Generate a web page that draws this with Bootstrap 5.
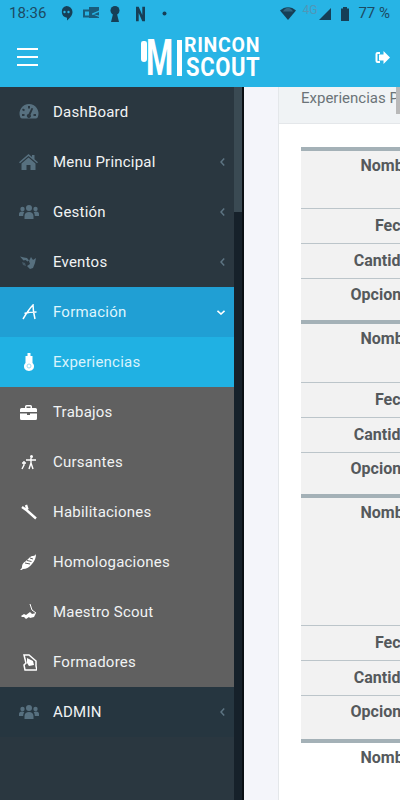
<!DOCTYPE html>
<html lang="es">
<head>
    <meta charset="UTF-8">
    <meta name="viewport" content="width=device-width, initial-scale=1.0">
    <title>Rincon Scout</title>
    <link href="https://cdn.jsdelivr.net/npm/bootstrap@5.3.0/dist/css/bootstrap.min.css" rel="stylesheet">
    <style>
        html, body {
            height: 800px;
            overflow: hidden;
        }
        body {
            font-family: Roboto, "Liberation Sans", sans-serif;
            background-color: #f4f5fa;
        }
        .top-area {
            background-color: #27b4e5;
            height: 87px;
        }
        .status-row {
            height: 27px;
            color: #1c4a63;
            font-size: 15px;
            padding: 0 10px 0 9px;
        }
        .status-row svg { fill: #163f57; }
        .status-time { width: 38px; }
        .gap-13 { margin-left: 13px; }
        .gap-10 { margin-left: 10px; }
        .gap-11 { margin-left: 11px; }
        .gap-16 { margin-left: 16px; }
        .gap-17 { margin-left: 17px; }
        .gap-9 { margin-left: 9px; }
        .net-label {
            font-size: 12px;
            line-height: 12px;
            color: #4f97b8;
            width: 17px;
            margin-left: 6px;
            margin-top: -7px;
        }
        .header-row { height: 60px; }
        .burger { width: 21px; margin-left: 17px; }
        .burger span {
            display: block;
            height: 2px;
            background-color: #fff;
            margin-bottom: 6px;
        }
        .logo-box {
            color: #fff;
            margin-left: 103px;
            width: 140px;
            margin-top: 1px;
        }
        .logo-hook {
            width: 6px;
            height: 21px;
            flex-shrink: 0;
            background-color: #fff;
            border-radius: 3px 3px 4px 4px;
            margin: -13px -1px 0 0;
        }
        .logo-m {
            font-weight: 700;
            font-size: 50px;
            line-height: 36px;
            width: 25px;
            flex-shrink: 0;
            transform: scaleX(.62);
            transform-origin: left center;
        }
        .logo-i {
            width: 5px;
            height: 36px;
            flex-shrink: 0;
            background-color: #fff;
            margin: 0 2px 0 6px;
        }
        .logo-words {
            font-weight: 700;
            letter-spacing: .7px;
        }
        .logo-top { font-size: 19.5px; line-height: 16px; }
        .logo-bottom {
            font-size: 25px;
            line-height: 20px;
            margin: 4px 0 0 2px;
            transform: scaleX(.88);
            transform-origin: left center;
        }
        .exit-icon { margin-left: auto; margin-right: 10px; }
        .body-row { height: 713px; }
        .side-menu {
            width: 234px;
            background-color: #2a3740;
            flex-shrink: 0;
        }
        .side-item {
            height: 50px;
            color: #f1f3f4;
            font-size: 15px;
            letter-spacing: .22px;
            padding-right: 9px;
            text-decoration: none;
        }
        .side-item:hover { color: #f1f3f4; }
        .side-icon {
            width: 53px;
            padding-left: 19px;
            flex-shrink: 0;
            line-height: 0;
        }
        .shift-1 { margin-left: 1px; }
        .shift-2 { margin-left: 2px; }
        .shift-3 { margin-left: 3px; }
        .shift-4 { margin-left: 4px; }
        .shift-5 { margin-left: 5px; }
        .icon-muted { fill: #57707f; }
        .icon-white { fill: #fff; }
        .side-arrow { margin-left: auto; }
        .item-open { background-color: #209fd4; color: #dff5fd; }
        .item-current { background-color: #20b1e3; color: #d9f3fc; }
        .item-grey { background-color: #606060; }
        .item-admin { background-color: #263640; }
        .scroll-strip {
            width: 10px;
            flex-shrink: 0;
            background-color: #16212a;
            border-right: 2px solid #0a0f13;
        }
        .scroll-thumb {
            height: 125px;
            background-color: #3a4a53;
        }
        .main-area {
            padding-left: 34px;
            min-width: 0;
            overflow: hidden;
            flex-grow: 1;
        }
        .content-card {
            width: 400px;
            height: 100%;
            border-radius: 0;
            border-width: 0 0 0 1px;
            border-color: #e4e7ea;
        }
        .content-head {
            background-color: #f0f3f5;
            border-radius: 0 !important;
            border-bottom: 1px solid #e4e7ea;
            height: 37px;
            flex-shrink: 0;
            padding: 0 0 0 22px;
            color: #6b7378;
            font-size: 15px;
            line-height: 22px;
        }
        .head-title {
            width: 95px;
            white-space: nowrap;
            overflow: hidden;
        }
        .head-btn {
            width: 40px;
            height: 27px;
            background-color: #b9b9b9;
        }
        .content-body { padding: 23px 0 0 22px; }
        .exp-table {
            width: 300px;
            margin: 0;
        }
        .exp-table tbody { border-top: 4px solid #a4b1b7 !important; }
        .exp-table th {
            width: 126px;
            text-align: right;
            font-size: 16px;
            font-weight: 700;
            line-height: 18px;
            color: #55595c;
            padding: 6px 9px 0 0;
            border-bottom: 1px solid #bcc5ca;
            background-color: #f2f2f2;
            box-shadow: none;
        }
        .exp-table td {
            padding: 0;
            border-bottom: 1px solid #bcc5ca;
            background-color: #f2f2f2;
            box-shadow: none;
        }
        .exp-table tr.row-end th, .exp-table tr.row-end td { border-bottom: 0; }
        .exp-table tr.row-end th { padding-top: 7px; }
        .exp-table tbody.plain-row th, .exp-table tbody.plain-row td { background-color: #fff; border-bottom: 0; }
        .h-name { height: 59px; }
        .h-name-mid { height: 60px; }
        .h-name-tall { height: 129px; }
        .h-short { height: 35px; }
        .h-option { height: 44px; }
        .h-option-wide { height: 46px; }
        .exp-table th.cell-mid { vertical-align: middle; padding-top: 1px; }
    </style>
</head>
<body>
    <div class="top-area">
        <div class="status-row d-flex align-items-center">
            <span class="status-time">18:36</span>
            <div class="d-flex align-items-center flex-grow-1">
                <svg class="gap-13" width="13" height="15" viewBox="0 0 13 15"><path d="M6.500 0a6 6 0 0 1 6 6c0 3.500-3 6.500-5.500 8.500v-2.700A6 6 0 0 1 6.500 0z"/><circle cx="4.500" cy="6" r="1.200" fill="#27b4e5"/><circle cx="8.500" cy="6" r="1.200" fill="#27b4e5"/></svg>
                <svg class="gap-10" width="16" height="13" viewBox="0 0 16 13"><path d="M6 0h10v11H6zM0 2.500h8v8H0z" opacity=".75"/><path d="M2 4.500h4v4H2z" fill="#27b4e5"/><path d="M9 6.500l7-3v1.500l-7 3zM9 7l7 3v-1.500z" fill="#27b4e5"/></svg>
                <svg class="gap-11" width="10" height="16" viewBox="0 0 10 16"><circle cx="5" cy="4.500" r="4.500"/><path d="M3.500 6h3L9 16H1z"/></svg>
                <svg class="gap-16" width="9" height="16" viewBox="0 0 10 16"><path d="M0 0h3l4 9V0h3v16H7L3 7v9H0z"/></svg>
                <svg class="gap-17" width="5" height="5" viewBox="0 0 5 5"><circle cx="2.500" cy="2.500" r="2"/></svg>
            </div>
            <svg width="16" height="13" viewBox="0 0 16 13"><path d="M0 3.500C4.500-1 11.500-1 16 3.500L8 13z"/><path d="M3 4.500C6-.5 10-.5 13 4.500" fill="#4d8cab" opacity=".5"/></svg>
            <span class="net-label">4G</span>
            <svg width="12" height="12" viewBox="0 0 12 12"><path d="M12 0v12H0z"/></svg>
            <svg class="gap-10" width="8" height="14" viewBox="0 0 8 14"><path d="M2 0h4v1.500h2V14H0V1.500h2z"/></svg>
            <span class="gap-9">77 %</span>
        </div>
        <div class="header-row d-flex align-items-center">
            <div class="burger"><span></span><span></span><span class="mb-0"></span></div>
            <div class="logo-box d-flex align-items-center">
                <div class="logo-hook"></div>
                <div class="logo-m">M</div>
                <div class="logo-i"></div>
                <div class="logo-words">
                    <div class="logo-top">RINCON</div>
                    <div class="logo-bottom">SCOUT</div>
                </div>
            </div>
            <svg class="exit-icon" width="15" height="13" viewBox="0 0 15 13" fill="#fff"><path d="M5 1H2.500A2 2 0 0 0 .5 3v7a2 2 0 0 0 2 2H5v-2H2.500V3H5z"/><path d="M8.500 0L15 6.500 8.500 13V9.500H4v-6h4.500z"/></svg>
        </div>
    </div>

    <div class="body-row d-flex">
        <nav class="side-menu d-flex flex-column">
            <a class="side-item d-flex align-items-center" href="#">
                <span class="side-icon"><svg class="icon-muted" width="20" height="18" viewBox="0 0 20 18"><path fill-rule="evenodd" d="M10 1a9.500 9.500 0 0 1 9 12.500c-.3 1-1 2-2 2H3c-1 0-1.700-1-2-2A9.500 9.500 0 0 1 10 1zM9 3v2.500h2V3zM4 5.500L3 7l2 1.300 1-1.500zM12.500 5l-3 6a2 2 0 1 0 2 .800l2.700-6.300zM3 11v2h2.500v-2zM14.500 11v2H17v-2z"/></svg></span>
                DashBoard
            </a>
            <a class="side-item d-flex align-items-center" href="#">
                <span class="side-icon"><svg class="icon-muted" width="19" height="16" viewBox="0 0 19 16"><path d="M9.500 0l3.500 3V1h2.500v4.200L19 8.300l-1 1L9.500 2 1 9.300l-1-1z"/><path d="M9.500 3.500L16.500 9.500V16h-5v-5h-4v5h-5V9.500z"/></svg></span>
                Menu Principal
                <svg class="side-arrow" width="5" height="8" viewBox="0 0 5 8"><path d="M4.200.5L1 4l3.200 3.500" fill="none" stroke="#5d7482" stroke-width="1.500"/></svg>
            </a>
            <a class="side-item d-flex align-items-center" href="#">
                <span class="side-icon"><svg class="icon-muted" width="20" height="14" viewBox="0 0 20 14"><circle cx="10" cy="3" r="3"/><circle cx="3.500" cy="4" r="2.200"/><circle cx="16.500" cy="4" r="2.200"/><path d="M5.500 14v-3c0-2.500 2-4 4.500-4s4.500 1.500 4.500 4v3zM0 11V9c0-1.500 1-2.500 3-2.500 1 0 1.700.2 2.300.7C4.500 8.200 4.200 9.500 4.200 11zM20 11V9c0-1.500-1-2.500-3-2.500-1 0-1.700.2-2.300.7.800 1 1.100 2.300 1.100 3.800z"/></svg></span>
                Gestión
                <svg class="side-arrow" width="5" height="8" viewBox="0 0 5 8"><path d="M4.200.5L1 4l3.200 3.500" fill="none" stroke="#5d7482" stroke-width="1.500"/></svg>
            </a>
            <a class="side-item d-flex align-items-center" href="#">
                <span class="side-icon"><svg class="icon-muted" width="18" height="15" viewBox="0 0 18 15"><path d="M1 1.500l4 1 3 .5 2 2.500-1.500 1-2-1.500-2 .5zM12 2l2 3 3-2-1 5-2 5-3 1-3-3 3-2-1-3z"/><path d="M3 7l3 1 1 3-3-1z" opacity=".6"/></svg></span>
                Eventos
                <svg class="side-arrow" width="5" height="8" viewBox="0 0 5 8"><path d="M4.200.5L1 4l3.200 3.500" fill="none" stroke="#5d7482" stroke-width="1.500"/></svg>
            </a>
            <a class="side-item item-open d-flex align-items-center" href="#">
                <span class="side-icon"><svg class="shift-3" width="15" height="16" viewBox="0 0 15 16"><path d="M1 15C4 10 8 4 11 1c0 4 1 10 2 14M2.500 9.500c3-1 7-1.500 12-1.500" fill="none" stroke="#fff" stroke-width="1.500"/></svg></span>
                Formación
                <svg class="side-arrow" width="8" height="5" viewBox="0 0 8 5"><path d="M.5.800L4 4 7.500.800" fill="none" stroke="#fff" stroke-width="1.600"/></svg>
            </a>
            <a class="side-item item-current d-flex align-items-center" href="#">
                <span class="side-icon"><svg class="shift-5" width="10" height="18" viewBox="0 0 10 18"><path d="M3.500 0h3v3h2v7c1 .8 1.500 2 1.500 3.300C10 16 8 18 5 18s-5-2-5-4.700C0 12 .5 10.800 1.500 10V3h2z" fill="#fff"/><circle cx="5" cy="13" r="2" fill="none" stroke="#9bdcf3"/></svg></span>
                Experiencias
            </a>
            <a class="side-item item-grey d-flex align-items-center" href="#">
                <span class="side-icon"><svg class="icon-white shift-1" width="17" height="15" viewBox="0 0 17 15"><path d="M5 3V1.500A1.500 1.500 0 0 1 6.500 0h4A1.500 1.500 0 0 1 12 1.500V3h3.500A1.500 1.500 0 0 1 17 4.500V7H0V4.500A1.500 1.500 0 0 1 1.500 3zM6.500 1.500V3h4V1.500zM0 8.500h7V10h3V8.500h7v5a1.500 1.500 0 0 1-1.500 1.500h-14A1.500 1.500 0 0 1 0 13.500z"/></svg></span>
                Trabajos
            </a>
            <a class="side-item item-grey d-flex align-items-center" href="#">
                <span class="side-icon"><svg class="shift-2" width="16" height="15" viewBox="0 0 16 15"><circle cx="10.500" cy="1.500" r="1.500" fill="#fff"/><path d="M5 5h10M10 3v5l-2 6M10 8l2 6M1 8h4M3 6v4l-2 4" fill="none" stroke="#fff" stroke-width="1.400"/></svg></span>
                Cursantes
            </a>
            <a class="side-item item-grey d-flex align-items-center" href="#">
                <span class="side-icon"><svg class="shift-2" width="16" height="16" viewBox="0 0 16 16"><path d="M1 3l5 3.500L15 14.500M5 1l1.500 4.500" fill="none" stroke="#fff" stroke-width="2.400"/></svg></span>
                Habilitaciones
            </a>
            <a class="side-item item-grey d-flex align-items-center" href="#">
                <span class="side-icon"><svg class="shift-1" width="17" height="16" viewBox="0 0 17 16"><path d="M16 0c0 3-1 7-4 10-2 3-6 5-9 5-1 1-2 1-3 1 1-1 2-2 2-3 0-4 3-5 5-7 2-1 2-3 5-4 1 0 3 0 4-2z" fill="#fff"/><path d="M5 9l5 1M7 6.500l4.500 1M10 4l3 1" fill="none" stroke="#606060"/></svg></span>
                Homologaciones
            </a>
            <a class="side-item item-grey d-flex align-items-center" href="#">
                <span class="side-icon"><svg class="shift-2" width="16" height="16" viewBox="0 0 16 16"><path d="M9 0l2 6 4 3" fill="none" stroke="#fff"/><path d="M0 12l3-2 2 1 4-3 2 2 4-1-2 4-4 1-1-1-3 2-2-2H1z" fill="#fff"/></svg></span>
                Maestro Scout
            </a>
            <a class="side-item item-grey d-flex align-items-center" href="#">
                <span class="side-icon"><svg class="shift-4" width="14" height="17" viewBox="0 0 14 17"><path d="M1 1h5l7 6v5l1 4H2l-1-5 2-2z" fill="none" stroke="#fff" stroke-width="1.500"/><path d="M4 4l6 3 1 4-5 1-2-3z" fill="#fff"/></svg></span>
                Formadores
            </a>
            <a class="side-item item-admin d-flex align-items-center" href="#">
                <span class="side-icon"><svg class="icon-muted" width="20" height="14" viewBox="0 0 20 14"><circle cx="10" cy="3" r="3"/><circle cx="3.500" cy="4" r="2.200"/><circle cx="16.500" cy="4" r="2.200"/><path d="M5.500 14v-3c0-2.500 2-4 4.500-4s4.500 1.500 4.500 4v3zM0 11V9c0-1.500 1-2.500 3-2.500 1 0 1.700.2 2.300.7C4.500 8.200 4.200 9.500 4.200 11zM20 11V9c0-1.500-1-2.500-3-2.500-1 0-1.700.2-2.300.7.800 1 1.100 2.300 1.100 3.800z"/></svg></span>
                ADMIN
                <svg class="side-arrow" width="5" height="8" viewBox="0 0 5 8"><path d="M4.200.5L1 4l3.200 3.500" fill="none" stroke="#5d7482" stroke-width="1.500"/></svg>
            </a>
        </nav>
        <div class="scroll-strip"><div class="scroll-thumb"></div></div>

        <main class="main-area">
            <div class="card content-card">
                <div class="card-header content-head d-flex">
                    <div class="head-title">Experiencias Personales</div>
                    <div class="head-btn"></div>
                </div>
                <div class="content-body">
                    <table class="table exp-table">
                        <tbody>
                            <tr class="h-name"><th>Nombre</th><td></td></tr>
                            <tr class="h-short"><th class="cell-mid">Fecha</th><td></td></tr>
                            <tr class="h-short"><th class="cell-mid">Cantidad</th><td></td></tr>
                            <tr class="h-option row-end"><th>Opciones</th><td></td></tr>
                        </tbody>
                        <tbody>
                            <tr class="h-name-mid"><th>Nombre</th><td></td></tr>
                            <tr class="h-short"><th class="cell-mid">Fecha</th><td></td></tr>
                            <tr class="h-short"><th class="cell-mid">Cantidad</th><td></td></tr>
                            <tr class="h-option row-end"><th>Opciones</th><td></td></tr>
                        </tbody>
                        <tbody>
                            <tr class="h-name-tall"><th>Nombre</th><td></td></tr>
                            <tr class="h-short"><th class="cell-mid">Fecha</th><td></td></tr>
                            <tr class="h-short"><th class="cell-mid">Cantidad</th><td></td></tr>
                            <tr class="h-option-wide row-end"><th>Opciones</th><td></td></tr>
                        </tbody>
                        <tbody class="plain-row">
                            <tr class="h-name"><th>Nombre</th><td></td></tr>
                        </tbody>
                    </table>
                </div>
            </div>
        </main>
    </div>
    <script src="https://cdn.jsdelivr.net/npm/bootstrap@5.3.0/dist/js/bootstrap.bundle.min.js"></script>
</body>
</html>
